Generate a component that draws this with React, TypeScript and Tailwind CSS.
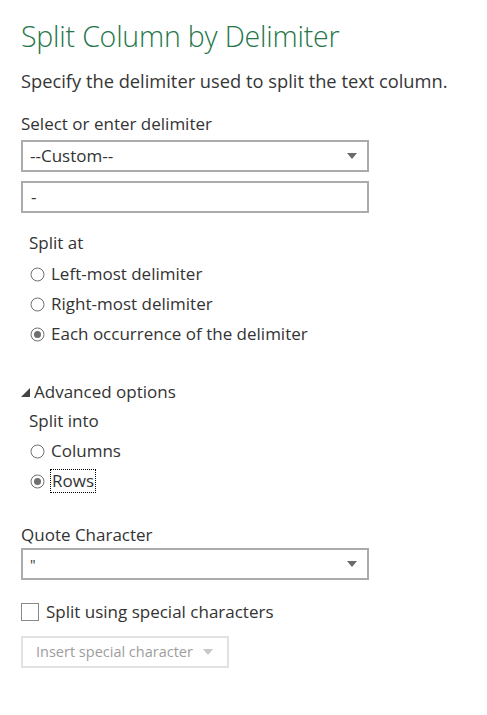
import { useState } from "react";

const font = "font-['Open_Sans','Noto_Sans',sans-serif]";

function Caret({ disabled = false }: { disabled?: boolean }) {
  return (
    <svg width="10" height="6" viewBox="0 0 10 6" aria-hidden>
      <path d="M0 0h10L5 6z" fill={disabled ? "#c8c8c8" : "#6b6b6b"} />
    </svg>
  );
}

function Radio({
  label,
  checked,
  focused = false,
}: {
  label: string;
  checked: boolean;
  focused?: boolean;
}) {
  return (
    <label className="flex h-[30px] items-center gap-[6px] pl-[9px] text-[17px] text-[#333]">
      <svg width="15" height="15" viewBox="0 0 15 15" aria-hidden>
        <circle cx="7.5" cy="7.5" r="6.5" fill="#fff" stroke="#6f6f6f" strokeWidth="1" />
        {checked ? <circle cx="7.5" cy="7.5" r="3.5" fill="#6f6f6f" /> : null}
      </svg>
      <span
        className={
          focused
            ? "-ml-[1px] border border-dotted border-black px-[1px] leading-[22px]"
            : "leading-[22px]"
        }
      >
        {label}
      </span>
    </label>
  );
}

export default function App() {
  const [splitAt] = useState("each");
  const [splitInto] = useState("rows");

  return (
    <div className={`${font} min-h-[715px] w-[487px] bg-white pl-[21px] pt-[16px]`}>
      <h1 className="text-[28.5px] font-light leading-[40px] tracking-[-0.2px] text-[#25774a]">
        Split Column by Delimiter
      </h1>
      <p className="mt-[14px] text-[18.3px] leading-[22px] text-[#363636]">
        Specify the delimiter used to split the text column.
      </p>

      <p className="mt-[21px] text-[17px] leading-[22px] text-[#333]">
        Select or enter delimiter
      </p>
      <div className="mt-[5px] flex h-[32px] w-[348px] items-center justify-between border-2 border-[#ababab] pl-[7px] pr-[10px] text-[17px] text-[#333]">
        <span>--Custom--</span>
        <Caret />
      </div>
      <div className="mt-[9px] flex h-[32px] w-[348px] items-center border-2 border-[#ababab] pl-[8px] text-[17px] text-[#333]">
        -
      </div>

      <p className="mt-[19px] pl-[8px] text-[17px] leading-[22px] text-[#333]">Split at</p>
      <div className="mt-[5px] flex flex-col">
        <Radio label="Left-most delimiter" checked={splitAt === "left"} />
        <Radio label="Right-most delimiter" checked={splitAt === "right"} />
        <Radio label="Each occurrence of the delimiter" checked={splitAt === "each"} />
      </div>

      <div className="mt-[32px] flex items-center gap-[4px] text-[17px] leading-[22px] text-[#333]">
        <svg width="9" height="9" viewBox="0 0 9 9" aria-hidden>
          <path d="M9 0v9H0z" fill="#444" />
        </svg>
        <span>Advanced options</span>
      </div>
      <p className="mt-[7px] pl-[8px] text-[17px] leading-[22px] text-[#333]">Split into</p>
      <div className="mt-[4px] flex flex-col">
        <Radio label="Columns" checked={splitInto === "columns"} />
        <Radio label="Rows" checked={splitInto === "rows"} focused />
      </div>

      <p className="mt-[28px] text-[17px] leading-[22px] text-[#333]">Quote Character</p>
      <div className="mt-[2px] flex h-[32px] w-[348px] items-center justify-between border-2 border-[#ababab] pl-[7px] pr-[10px] text-[14px] text-[#333]">
        <span>"</span>
        <Caret />
      </div>

      <label className="mt-[21px] flex items-center gap-[7px] text-[17px] leading-[22px] text-[#333]">
        <span className="h-[18px] w-[18px] border border-[#8a8a8a] bg-white" />
        <span>Split using special characters</span>
      </label>
      <button
        type="button"
        disabled
        className="mt-[13px] flex h-[32px] w-[208px] items-center gap-[10px] border-2 border-[#e1e1e1] pl-[13px] text-[14.5px] text-[#9d9d9d]"
      >
        <span>Insert special character</span>
        <Caret disabled />
      </button>
    </div>
  );
}
